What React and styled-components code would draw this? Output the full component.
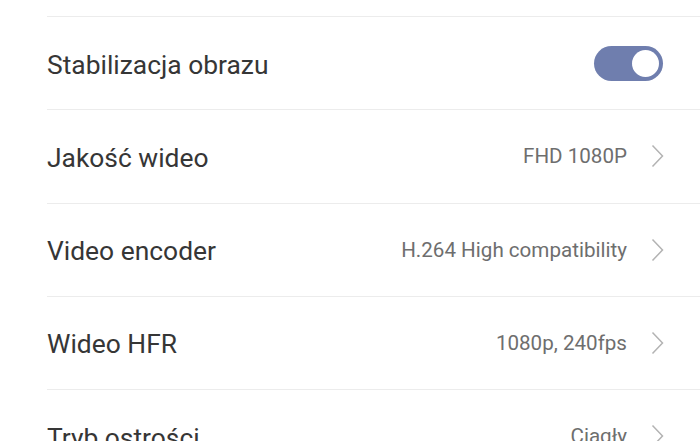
import React from 'react';
import styled, { createGlobalStyle } from 'styled-components';

const GlobalStyle = createGlobalStyle`
  html, body {
    margin: 0;
    padding: 0;
    background: #fff;
    overflow: hidden;
  }
  body {
    font-family: Roboto, "Noto Sans", "Liberation Sans", sans-serif;
    -webkit-font-smoothing: antialiased;
  }
`;

const SettingsList = styled.div`
  width: 700px;
  height: 441px;
  overflow: hidden;
  padding-top: 16px;
  box-sizing: border-box;
`;

const Row = styled.div`
  display: flex;
  align-items: center;
  height: 93.25px;
  margin-left: 47px;
  padding-right: 36px;
  border-top: 1px solid #ececec;
  box-sizing: border-box;
`;

const Label = styled.span`
  flex: 1;
  font-size: 26.4px;
  color: #363636;
  padding-top: 3px;
`;

const Value = styled.span`
  font-size: 20.6px;
  color: #6e6e6e;
  margin-right: 24px;
`;

const Chevron = styled.svg`
  width: 13px;
  height: 24px;
  flex: none;
`;

const Switch = styled.div`
  width: 69px;
  height: 35px;
  border-radius: 18px;
  background: #6f7eae;
  display: flex;
  align-items: center;
  justify-content: flex-end;
  padding: 0 4px;
  box-sizing: border-box;
  margin-right: 1px;
`;

const Knob = styled.div`
  width: 27px;
  height: 27px;
  border-radius: 50%;
  background: #fff;
`;

const Arrow = () => (
  <Chevron viewBox="0 0 13 24">
    <path d="M1.5 1.5 L11.5 12 L1.5 22.5" fill="none" stroke="#b3b3b3" strokeWidth="1.5" />
  </Chevron>
);

const rows = [
  { label: 'Jakość wideo', value: 'FHD 1080P' },
  { label: 'Video encoder', value: 'H.264 High compatibility' },
  { label: 'Wideo HFR', value: '1080p, 240fps' },
  { label: 'Tryb ostrości', value: 'Ciągły' },
];

export default function App() {
  return (
    <>
      <GlobalStyle />
      <SettingsList>
        <Row>
          <Label>Stabilizacja obrazu</Label>
          <Switch>
            <Knob />
          </Switch>
        </Row>
        {rows.map((r) => (
          <Row key={r.label}>
            <Label>{r.label}</Label>
            <Value>{r.value}</Value>
            <Arrow />
          </Row>
        ))}
      </SettingsList>
    </>
  );
}
